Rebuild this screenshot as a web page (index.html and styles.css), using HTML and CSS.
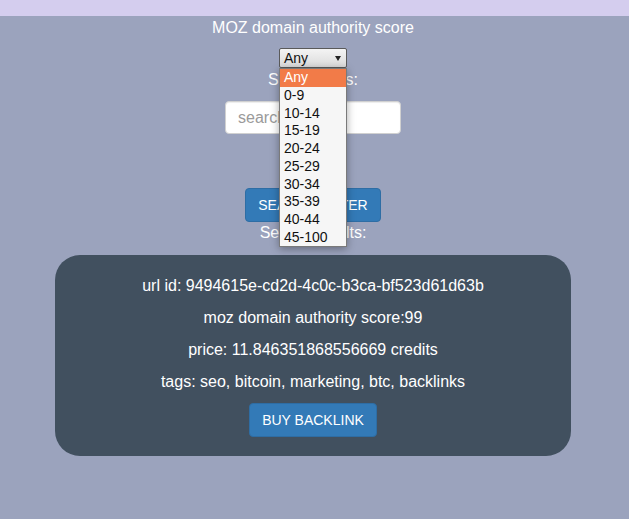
FILE: index.html
```html
<!DOCTYPE html>
<html lang="en">
<head>
<meta charset="utf-8">
<title>Backlinks</title>
<link rel="stylesheet" href="styles.css">
</head>
<body>
<header class="topbar"></header>
<main class="page">
  <div class="label label-first">MOZ domain authority score</div>
  <div class="select-wrap">
    <div class="select"><span>Any</span><span class="arrow"></span></div>
    <ul class="options">
      <li class="active">Any</li>
      <li>0-9</li>
      <li>10-14</li>
      <li>15-19</li>
      <li>20-24</li>
      <li>25-29</li>
      <li>30-34</li>
      <li>35-39</li>
      <li>40-44</li>
      <li>45-100</li>
    </ul>
  </div>
  <div class="label label-tags">Search tags:</div>
  <input class="search" type="text" placeholder="search tags">
  <button class="btn btn-search" type="button">SEARCH FILTER</button>
  <div class="label label-results">Search results:</div>
  <section class="card">
    <p>url id: 9494615e-cd2d-4c0c-b3ca-bf523d61d63b</p>
    <p>moz domain authority score:99</p>
    <p>price: 11.846351868556669 credits</p>
    <p>tags: seo, bitcoin, marketing, btc, backlinks</p>
    <button class="btn btn-buy" type="button">BUY BACKLINK</button>
  </section>
</main>
</body>
</html>
```

FILE: styles.css
```css
html, body {
  margin: 0;
  padding: 0;
}
body {
  background: #9ba3bd;
  font-family: "Liberation Sans", Arial, sans-serif;
  color: #ffffff;
  height: 519px;
  overflow: hidden;
}
.topbar {
  height: 16px;
  background: #d4cdee;
}
.page {
  display: flex;
  flex-direction: column;
  align-items: center;
  padding-right: 3px;
}
.label {
  font-size: 16px;
  line-height: 18.4px;
  color: #ffffff;
}
.label-first {
  margin-top: 2.7px;
}
.select-wrap {
  position: relative;
  margin-top: 11.3px;
  width: 68px;
  height: 20px;
}
.select {
  box-sizing: border-box;
  width: 68px;
  height: 20px;
  border: 1px solid #5a5a5a;
  border-radius: 2px;
  background: linear-gradient(#f4f4f4, #dadada);
  color: #111;
  font-size: 14px;
  line-height: 18px;
  padding-left: 4px;
  display: flex;
  align-items: center;
  justify-content: space-between;
  padding-right: 5px;
}
.arrow {
  width: 0;
  height: 0;
  border-left: 3px solid transparent;
  border-right: 3px solid transparent;
  border-top: 5px solid #222;
  margin-top: 1px;
}
.options {
  position: absolute;
  left: 0;
  top: 20px;
  box-sizing: border-box;
  width: 68px;
  margin: 0;
  padding: 0;
  list-style: none;
  background: #f6f6f6;
  border: 1px solid #7a7a7a;
  box-shadow: 0 2px 8px rgba(0, 0, 0, 0.35);
  z-index: 10;
}
.options li {
  height: 17.7px;
  line-height: 17.7px;
  font-size: 14px;
  color: #111;
  padding-left: 4px;
}
.options li.active {
  background: #f27b48;
  color: #ffffff;
}
.label-tags {
  margin-top: 3px;
}
.search {
  box-sizing: border-box;
  width: 176px;
  height: 33px;
  margin-top: 11.3px;
  padding: 6px 12px;
  border: 1px solid #d0d0d0;
  border-radius: 4px;
  background: #ffffff;
  font-family: "Liberation Sans", Arial, sans-serif;
  font-size: 16px;
  color: #555;
  box-shadow: inset 0 1px 1px rgba(0, 0, 0, 0.075);
}
.search::placeholder {
  color: #9a9a9a;
}
.btn {
  box-sizing: border-box;
  height: 34px;
  padding: 6px 12px;
  border: 1px solid #2e6da4;
  border-radius: 4px;
  background: #337ab7;
  color: #ffffff;
  font-family: "Liberation Sans", Arial, sans-serif;
  font-size: 14px;
  line-height: 20px;
  cursor: pointer;
}
.btn-search {
  margin-top: 54px;
}
.label-results {
  margin-top: 2px;
}
.card {
  box-sizing: border-box;
  width: 516px;
  margin-top: 12px;
  padding: 15px 20px 19px;
  background: #41505f;
  border-radius: 25px;
  display: flex;
  flex-direction: column;
  align-items: center;
}
.card p {
  margin: 0;
  font-size: 16px;
  line-height: 32px;
  color: #ffffff;
  text-align: center;
}
.btn-buy {
  margin-top: 5px;
}
```
